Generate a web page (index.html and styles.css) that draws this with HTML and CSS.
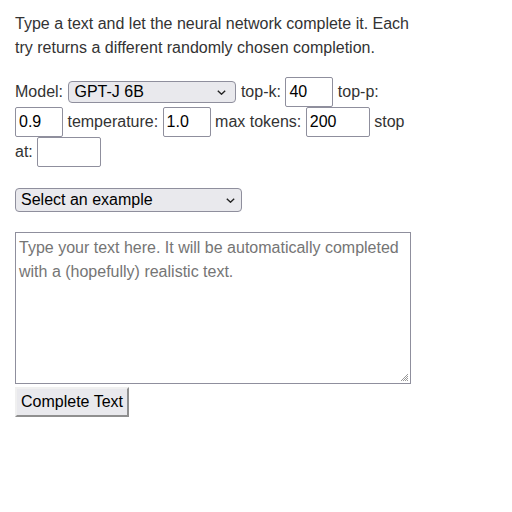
FILE: index.html
```html
<!DOCTYPE html>
<html>
<head>
<meta charset="utf-8">
<link rel="stylesheet" href="styles.css">
</head>
<body>
<div class="page">
  <p class="intro">Type a text and let the neural network complete it. Each try returns a different randomly chosen completion.</p>
  <div class="controls">Model: <span class="sel-wrap model-wrap"><select class="sel model"><option>GPT-J 6B</option></select><svg class="chev" width="9" height="5" viewBox="0 0 9 5"><path d="M0.8 0.8 L4.5 4.2 L8.2 0.8" fill="none" stroke="#222" stroke-width="1.4"/></svg></span> top-k: <input class="num" type="text" value="40"> top-p: <input class="num" type="text" value="0.9"> temperature: <input class="num" type="text" value="1.0"> max tokens: <input class="num wide" type="text" value="200"> stop at: <input class="num wide" type="text" value=""></div>
  <div class="examples"><span class="sel-wrap example-wrap"><select class="sel example"><option>Select an example</option></select><svg class="chev" width="9" height="5" viewBox="0 0 9 5"><path d="M0.8 0.8 L4.5 4.2 L8.2 0.8" fill="none" stroke="#222" stroke-width="1.4"/></svg></span></div>
  <div class="ta-wrap">
    <textarea class="input" placeholder="Type your text here. It will be automatically completed with a (hopefully) realistic text."></textarea>
    <svg class="grip" width="10" height="10" viewBox="0 0 10 10"><path d="M9 2 L2 9 M9 4 L4 9 M9 6 L6 9 M9 8 L8 9" stroke="#9a9a9a" stroke-width="1"/></svg>
  </div>
  <div class="actions"><button class="submit">Complete Text</button></div>
</div>
</body>
</html>
```

FILE: styles.css
```css
html, body {
  margin: 0;
  padding: 0;
  background: #fff;
}
body {
  font-family: "Liberation Sans", Arial, sans-serif;
  font-size: 16px;
  line-height: 24px;
  color: #333;
}
.page {
  width: 396px;
  padding: 12px 0 0 15px;
  display: flex;
  flex-direction: column;
}
.intro {
  margin: 0 0 17px 0;
}
.controls {
  margin: 0;
}
.num {
  box-sizing: border-box;
  width: 48px;
  height: 30px;
  margin: 0;
  padding: 0 3px;
  font-family: "Liberation Sans", Arial, sans-serif;
  font-size: 16px;
  color: #000;
  border: 1px solid #8f8f9d;
  border-radius: 2px;
  background: #fff;
  vertical-align: baseline;
}
.num.wide {
  width: 64px;
}
.sel-wrap {
  position: relative;
  display: inline-block;
  line-height: 0;
}
.model-wrap {
  margin-left: 1px;
}
.sel {
  appearance: none;
  -webkit-appearance: none;
  box-sizing: border-box;
  margin: 0;
  padding: 0 20px 0 5px;
  font-family: "Liberation Sans", Arial, sans-serif;
  font-size: 16px;
  line-height: 20px;
  color: #000;
  background: #e9e9ed;
  border: 1px solid #8f8f9d;
  border-radius: 4px;
}
.chev {
  position: absolute;
  top: 50%;
  margin-top: -2px;
  pointer-events: none;
}
.model-wrap .chev {
  right: 10px;
}
.example-wrap .chev {
  right: 7px;
}
.model {
  width: 168px;
  height: 22px;
}
.examples {
  margin-top: 21px;
  line-height: 0;
}
.example {
  width: 227px;
  height: 24px;
}
.ta-wrap {
  position: relative;
  margin-top: 20px;
  line-height: 0;
  width: 396px;
}
.input {
  box-sizing: border-box;
  width: 396px;
  height: 152px;
  margin: 0;
  padding: 3px 3px;
  font-family: "Liberation Sans", Arial, sans-serif;
  font-size: 16px;
  line-height: 24px;
  color: #000;
  border: 1px solid #8f8f9d;
  border-radius: 0;
  resize: none;
}
.input::placeholder {
  color: #757575;
}
.grip {
  position: absolute;
  right: 2px;
  bottom: 2px;
}
.actions {
  margin-top: 3px;
  line-height: 0;
}
.submit {
  box-sizing: border-box;
  width: 114px;
  height: 30px;
  margin: 0;
  padding: 0;
  font-family: "Liberation Sans", Arial, sans-serif;
  font-size: 16px;
  color: #000;
  background: #e9e9ed;
  border: 2px solid #d4d4d8;
  border-top-color: #f0f0f0;
  border-left-color: #f0f0f0;
  border-right-color: #8f8f8f;
  border-bottom-color: #8f8f8f;
  border-radius: 0;
}
```
